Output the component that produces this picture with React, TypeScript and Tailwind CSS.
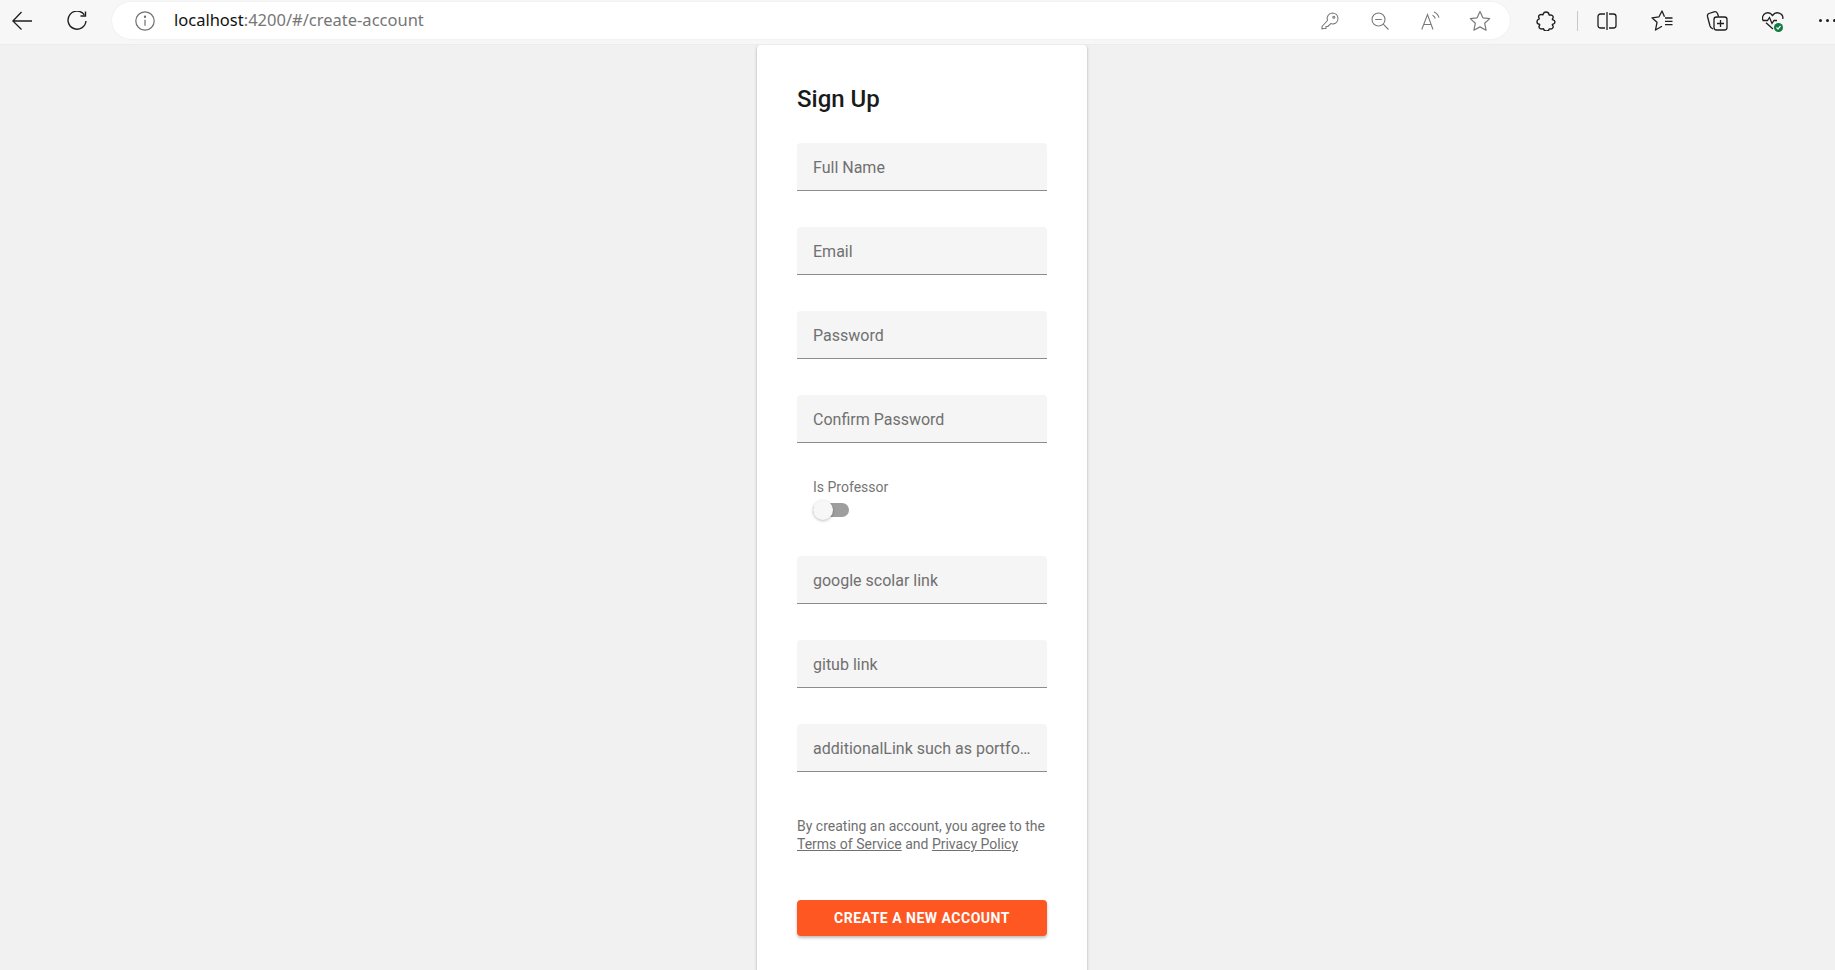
const roboto = "font-['Roboto',sans-serif]";

function Field({ label }: { label: string }) {
  return (
    <div className="flex h-12 w-full items-center overflow-hidden rounded-t-[4px] border-b border-[#8c8c8c] bg-[#f5f5f5] px-4 pt-[3px]">
      <span className="truncate text-base leading-6 text-[#707070]">{label}</span>
    </div>
  );
}

function BackIcon() {
  return (
    <svg width="20" height="20" viewBox="0 0 20 20" fill="none" stroke="#1f1f1f" strokeWidth="1.3">
      <path d="M9.500 1 .900 10l8.600 8.500M1 10h19" />
    </svg>
  );
}

function ReloadIcon() {
  return (
    <svg width="20" height="20" viewBox="0 0 20 20" fill="none" stroke="#1f1f1f" strokeWidth="1.4">
      <path d="M17.300 3.800A9 9 0 1 0 19 10" />
      <path d="M18.500.500v4.500h-5" />
    </svg>
  );
}

function InfoIcon() {
  return (
    <svg width="20" height="20" viewBox="0 0 20 20" fill="none" stroke="#707070" strokeWidth="1.200">
      <circle cx="10" cy="10" r="9.200" />
      <path d="M10 8.800v6" />
      <circle cx="10" cy="5.800" r=".6" fill="#707070" />
    </svg>
  );
}

function KeyIcon() {
  return (
    <svg width="18" height="18" viewBox="0 0 18 18" fill="none" stroke="#7a7a7a" strokeWidth="1.100">
      <path d="M11.500 1a5.500 5.500 0 0 1 1 10.900c-1 .2-2 .1-2.800-.3L6.800 14.500H5v2H2.800L1 17v-2.500l5.500-6A5.500 5.500 0 0 1 11.500 1z" strokeLinejoin="round" />
      <circle cx="12.800" cy="5.200" r="1" />
    </svg>
  );
}

function ZoomOutIcon() {
  return (
    <svg width="18" height="18" viewBox="0 0 18 18" fill="none" stroke="#7a7a7a" strokeWidth="1.100">
      <circle cx="7.500" cy="7.500" r="6.500" />
      <path d="M4.200 7.500h6.600M12.200 12.200 17.500 17.500" />
    </svg>
  );
}

function ReadAloudIcon() {
  return (
    <svg width="20" height="20" viewBox="0 0 20 20" fill="none" stroke="#7a7a7a" strokeWidth="1.100">
      <path d="M.8 18.500 6.500 3.500 12 18.500M2.600 13.500h7.800" />
      <path d="M11.500 4.200c1.400.6 2.400 1.800 2.800 3.300M13 1c2.500.9 4.200 2.900 5 5.700" />
    </svg>
  );
}

function StarIcon() {
  return (
    <svg width="22" height="22" viewBox="0 0 22 22" fill="none" stroke="#7a7a7a" strokeWidth="1.200">
      <path d="M11 1.500l2.900 6.300 6.800.8-5 4.700 1.400 6.900L11 16.900l-6.100 3.300 1.400-6.900-5-4.700 6.800-.8z" strokeLinejoin="round" />
    </svg>
  );
}

function PuzzleIcon() {
  return (
    <svg width="20" height="20" viewBox="0 0 20 20" fill="none" stroke="#1f1f1f" strokeWidth="1.400">
      <path
        d="M7 3.500C7.500 1.800 8.800 1 10 1c1.600 0 2.800 1 3 2.500.1.500.6.700 1.200.6 1.500-.3 3 .6 3 2.100 0 .7-.4 1.200-.7 1.700-.3.400-.2.700.3.800 1.400.4 2.200 1.200 2.200 2.300s-.8 1.900-2.200 2.300c-.5.100-.6.400-.3.800.3.500.7 1 .7 1.700 0 1.500-1.500 2.400-3 2.100-.6-.1-1.100.1-1.200.6-.2 1-1.300 1.500-2.500 1.500-1.300 0-2.400-.7-2.800-1.800-.2-.5-.6-.6-1.100-.4-1.700.5-3.600-.3-3.600-2 0-.7.400-1.300.6-1.700.2-.4 0-.7-.4-.9C1.700 13 1 12.100 1 10.800c0-1.200.7-2.200 1.700-2.600.4-.2.600-.5.4-.9-.2-.4-.5-1-.5-1.700 0-1.700 1.900-2.500 3.400-2 .4.200.8.200 1-.1z"
        strokeLinejoin="round"
      />
    </svg>
  );
}

function SplitIcon() {
  return (
    <svg width="20" height="20" viewBox="0 0 20 20" fill="none" stroke="#1f1f1f" strokeWidth="1.300">
      <path d="M8 3H3.500A2.500 2.500 0 0 0 1 5.500v9A2.500 2.500 0 0 0 3.500 17H8M12 3h4.500A2.500 2.500 0 0 1 19 5.500v9a2.500 2.500 0 0 1-2.500 2.500H12M10 1v18" />
    </svg>
  );
}

function FavoritesIcon() {
  return (
    <svg width="22" height="22" viewBox="0 0 22 22" fill="none" stroke="#1f1f1f" strokeWidth="1.300">
      <path d="M13.500 6.800 11 1 8 6.800 1 7.800l5 4.500-1.500 7.700L11 16.300" strokeLinejoin="round" />
      <path d="M14 8h7.500M14 11.300h7.500M14 14.600h7.500" />
    </svg>
  );
}

function CollectionsIcon() {
  return (
    <svg width="22" height="22" viewBox="0 0 22 22" fill="none" stroke="#1f1f1f" strokeWidth="1.300">
      <path d="M7 19c-1.500-.5-2.500-1.500-3-3L1.500 6.500C1.200 5 1.800 4 3 3.500L8 1.800c1.500-.4 2.800.2 3.500 1.700l1 3" />
      <rect x="8" y="7" width="13" height="13" rx="2.500" />
      <path d="M14.500 10v7M11 13.500h7" />
    </svg>
  );
}

function HealthIcon() {
  return (
    <svg width="22" height="22" viewBox="0 0 22 22" fill="none">
      <path
        d="M11 19 4 12.800M20.800 9c.2-1.200 0-4.400-3.500-5.800-2.700-1-5.300.2-6.800 2.300C9 3.400 6.500 2.200 3.800 3.200.2 4.600 0 8.500 1 10"
        stroke="#1f1f1f"
        strokeWidth="1.300"
      />
      <path d="M.5 10.500h5l2-3 2.500 6 2-3h3" stroke="#1f1f1f" strokeWidth="1.300" />
      <circle cx="16.500" cy="17.500" r="4.500" fill="#107c41" />
      <path d="M14.500 17.500l1.500 1.500 2.500-3" stroke="#fff" strokeWidth="1.200" />
    </svg>
  );
}

function Toolbar() {
  return (
    <header className="flex h-[45px] shrink-0 items-center overflow-hidden border-b border-[#ececec] bg-[#f7f7f7]">
      <div className="flex w-[112px] shrink-0 items-center pb-[3px] pl-3">
        <BackIcon />
        <div className="ml-[35px]"><ReloadIcon /></div>
      </div>
      <div className="mb-[3px] flex h-[37px] w-[1398px] shrink-0 items-center rounded-full bg-white pr-[19px] pl-[23px] shadow-[0_0_2px_rgba(0,0,0,0.08)]">
        <InfoIcon />
        <span className="ml-[19px] font-['Noto_Sans',sans-serif] text-[16.500px] text-[#111]">
          localhost<span className="text-[#767676]">:4200/#/create-account</span>
        </span>
        <div className="ml-auto flex items-center">
          <KeyIcon />
          <div className="ml-8"><ZoomOutIcon /></div>
          <div className="ml-8"><ReadAloudIcon /></div>
          <div className="ml-7"><StarIcon /></div>
        </div>
      </div>
      <div className="flex items-center pb-[3px] pl-[26px]">
        <PuzzleIcon />
        <div className="ml-[21px] h-5 w-px bg-[#c8c8c8]" />
        <div className="ml-[19px]"><SplitIcon /></div>
        <div className="ml-[34px]"><FavoritesIcon /></div>
        <div className="ml-[33px]"><CollectionsIcon /></div>
        <div className="ml-[34px]"><HealthIcon /></div>
        <div className="ml-[35px] flex gap-[4.500px]">
          <div className="size-[2.500px] rounded-full bg-[#1f1f1f]" />
          <div className="size-[2.500px] rounded-full bg-[#1f1f1f]" />
          <div className="size-[2.500px] rounded-full bg-[#1f1f1f]" />
        </div>
      </div>
    </header>
  );
}

export default function App() {
  return (
    <div className="flex h-[970px] flex-col overflow-hidden bg-[#f1f1f1]">
      <Toolbar />
      <main className="flex flex-1 justify-center overflow-hidden pl-[9px]">
        <div className={`h-[960px] w-[330px] shrink-0 rounded-[4px] bg-white px-10 pt-[38px] shadow-[0_1px_3px_rgba(0,0,0,0.3)] ${roboto}`}>
          <h1 className="text-2xl leading-8 font-medium text-[#1a1a1a]">Sign Up</h1>
          <div className="mt-7 flex flex-col gap-9">
            <Field label="Full Name" />
            <Field label="Email" />
            <Field label="Password" />
            <Field label="Confirm Password" />
          </div>
          <div className="mt-[35px] h-[45px] px-4">
            <p className="text-[14px] leading-[18px] text-[#757575]">Is Professor</p>
            <div className="relative mt-[7px] h-[14px] w-9 rounded-full bg-[#9e9e9e]">
              <div className="absolute top-[-3px] left-0 size-5 rounded-full bg-[#f7f7f7] shadow-[0_1px_3px_rgba(0,0,0,0.25)]" />
            </div>
          </div>
          <div className="mt-[33px] flex flex-col gap-9">
            <Field label="google scolar link" />
            <Field label="gitub link" />
            <Field label="additionalLink such as portfolio" />
          </div>
          <p className="mt-[45px] text-[14px] leading-[18px] whitespace-nowrap text-[#707070]">
            By creating an account, you agree to the
            <br />
            <a className="underline">Terms of Service</a> and <a className="underline">Privacy Policy</a>
          </p>
          <button className="mt-[47px] h-9 w-full rounded-[4px] bg-[#ff5722] pb-px text-sm font-bold tracking-[0.5px] text-white shadow-[0_2px_3px_rgba(0,0,0,0.25)]">
            CREATE A NEW ACCOUNT
          </button>
        </div>
      </main>
    </div>
  );
}
